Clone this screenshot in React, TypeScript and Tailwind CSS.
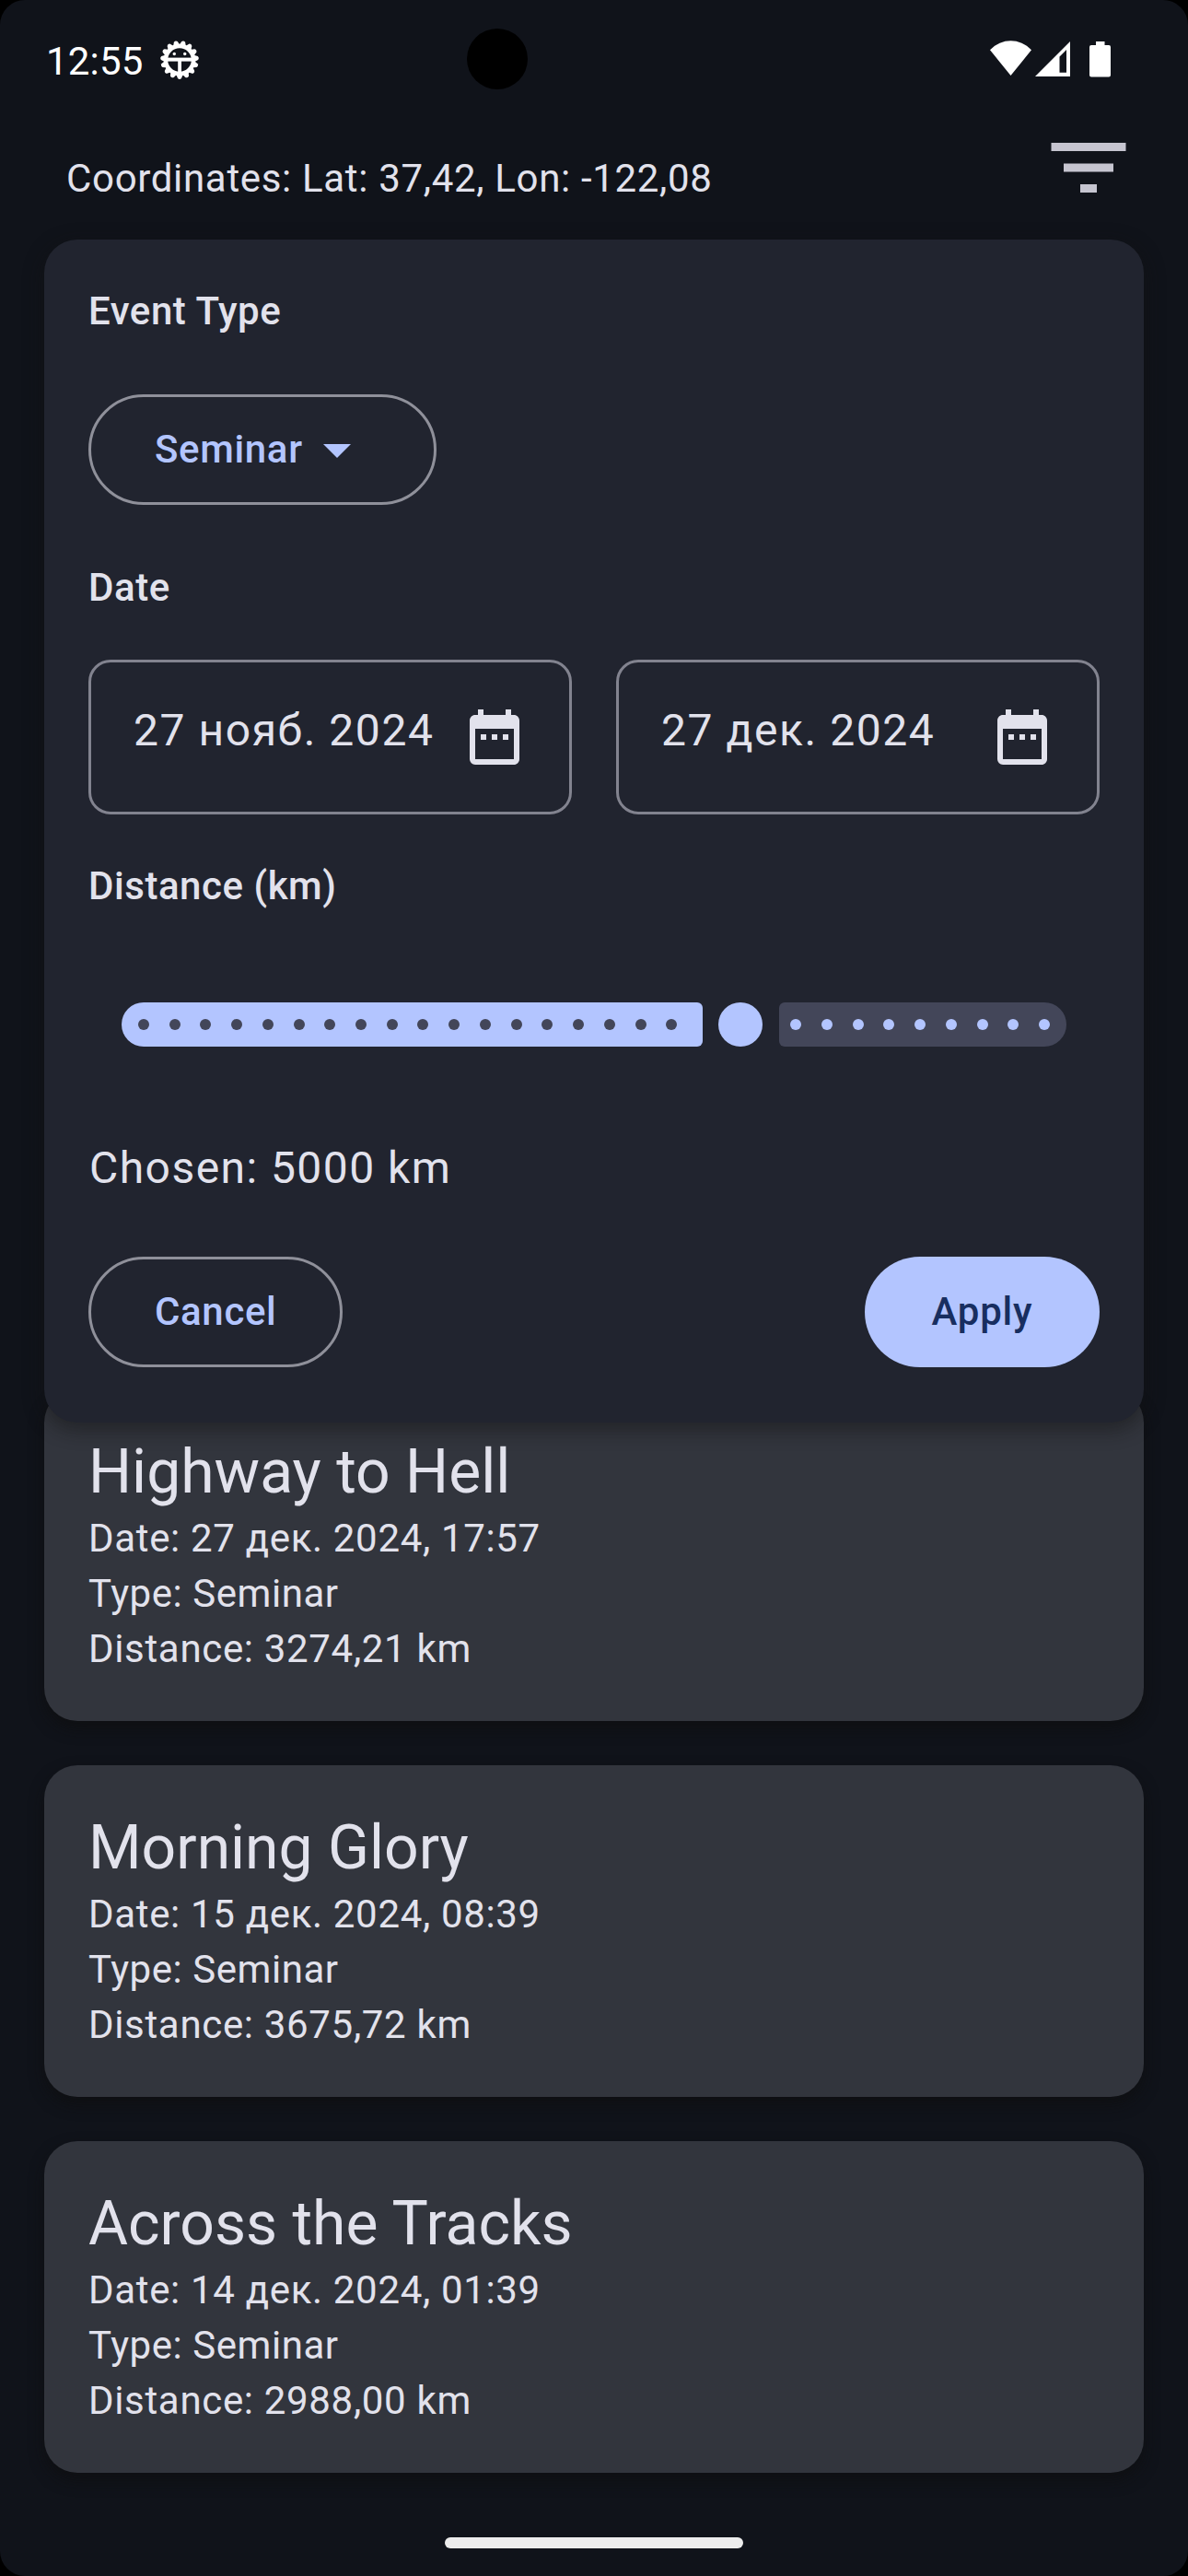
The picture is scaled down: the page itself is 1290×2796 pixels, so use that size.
import type { ReactNode } from "react";
import { MdArrowDropDown, MdDateRange, MdFilterList } from "react-icons/md";

const events = [
  { title: "Highway to Hell", date: "27 дек. 2024, 17:57", distance: "3274,21" },
  { title: "Morning Glory", date: "15 дек. 2024, 08:39", distance: "3675,72" },
  { title: "Across the Tracks", date: "14 дек. 2024, 01:39", distance: "2988,00" },
];

const TEETH = Array.from({ length: 15 }, (_, i) => i * 24 + 12);

function DebugIcon() {
  return (
    <svg viewBox="0 0 42 42" className="size-[42px]" fill="white">
      {TEETH.map((a) => (
        <path key={a} d="M17 6 L19 1 Q21 -0.8 23 1 L25 6 Z" transform={`rotate(${a} 21 21)`} />
      ))}
      <circle cx="21" cy="21" r="15" fill="none" stroke="white" strokeWidth="4.4" />
      <rect x="7" y="18.6" width="28" height="4" />
      <rect x="19.2" y="21" width="3.8" height="15" />
      <circle cx="15.3" cy="14.5" r="1.7" />
      <circle cx="26.7" cy="14.5" r="1.7" />
    </svg>
  );
}

function StatusBar() {
  return (
    <header className="relative flex h-[128px] items-start pr-[84px] pl-[50px] text-white">
      <span className="mt-[42px] w-[124px] text-[42px] leading-[50px] tracking-[0.2px]">12:55</span>
      <div className="mt-[44px]"><DebugIcon /></div>
      <div className="absolute top-[31px] left-[507px] size-[66px] rounded-full bg-black" />
      <div className="mt-[44px] ml-auto flex items-start">
        <svg viewBox="0 0 45 39" className="h-[39px] w-[45px]" fill="white">
          <path d="M0 10.3 C13 -3 32 -3 45 10.3 L22.5 38 Z" />
        </svg>
        <svg viewBox="0 0 38 38" className="mt-px ml-[4px] size-[38px]" fill="white">
          <path fillRule="evenodd" d="M38 0 V38 H0 Z M34 9 L26.5 16.5 V33.7 H34 Z" />
        </svg>
        <svg viewBox="0 0 23 39" className="mt-px ml-[21px] h-[39px] w-[23px]" fill="white">
          <path d="M7 0 H16.5 V4 H21 Q23 4 23 6 V36.5 Q23 38.5 21 38.5 H2 Q0 38.5 0 36.5 V6 Q0 4 2 4 H7 Z" />
        </svg>
      </div>
    </header>
  );
}

function Label({ children }: { children: ReactNode }) {
  return <h2 className="text-[42px] leading-[60px] font-medium tracking-[0.55px]">{children}</h2>;
}

function DateField({ value }: { value: string }) {
  return (
    <div className="flex h-[168px] flex-1 items-center justify-between rounded-[24px] border-[3px] border-[#82838f] pr-[45px] pl-[46px]">
      <span className="-mt-[14px] text-[48px] leading-[72px] tracking-[1.55px] whitespace-nowrap">{value}</span>
      <MdDateRange className="size-[72px] shrink-0" />
    </div>
  );
}

function Ticks({ count, className }: { count: number; className: string }) {
  return (
    <>
      {Array.from({ length: count }, (_, i) => (
        <i key={i} className={className} />
      ))}
    </>
  );
}

function DistanceSlider() {
  return (
    <div className="mt-[96px] flex h-[48px] items-center px-[36px]">
      <div className="flex h-full w-[630.5px] items-center gap-[21.72px] rounded-l-[24px] rounded-r-[6px] bg-[#b3c5ff] pl-[18px]">
        <Ticks count={18} className="size-[12px] shrink-0 rounded-full bg-[#434659]" />
      </div>
      <div className="ml-[17.5px] size-[48px] shrink-0 rounded-full bg-[#b3c5ff]" />
      <div className="ml-[18px] flex h-full flex-1 items-center justify-end gap-[21.72px] rounded-l-[6px] rounded-r-[24px] bg-[#434659] pr-[18px]">
        <Ticks count={9} className="size-[12px] shrink-0 rounded-full bg-[#b3c5ff]" />
      </div>
    </div>
  );
}

function FilterPanel() {
  return (
    <section className="absolute inset-x-[48px] top-[8px] z-10 h-[1284px] rounded-[36px] bg-[#21242f] px-[48px] pt-[48px] shadow-[0_6px_20px_3px_rgba(17,17,17,0.45)]">
      <Label>Event Type</Label>
      <button className="mt-[60px] flex h-[120px] w-[378px] items-center rounded-full border-[3px] border-[#8f909a] px-[69px] pb-px text-[42px] font-medium tracking-[0.65px] text-[#b3c5ff]">
        Seminar
        <MdArrowDropDown className="ml-auto size-[72px]" />
      </button>
      <div className="mt-[60px]"><Label>Date</Label></div>
      <div className="mt-[48px] flex gap-[48px]">
        <DateField value="27 нояб. 2024" />
        <DateField value="27 дек. 2024" />
      </div>
      <div className="mt-[48px]"><Label>Distance (km)</Label></div>
      <DistanceSlider />
      <p className="mt-[96px] pl-px text-[48px] leading-[72px] tracking-[1.45px]">Chosen: 5000 km</p>
      <div className="mt-[60px] flex h-[120px] justify-between text-[42px] font-medium">
        <button className="rounded-full border-[3px] border-[#8f909a] px-[69px] pb-px tracking-[0.65px] text-[#b3c5ff]">Cancel</button>
        <button className="w-[255px] rounded-full bg-[#b3c5ff] pb-px tracking-[0.8px] text-[#182e60]">Apply</button>
      </div>
    </section>
  );
}

export default function App() {
  return (
    <div className="h-[2796px] w-[1290px] overflow-hidden bg-black font-['Roboto',sans-serif]">
      <div className="flex h-full flex-col rounded-[27px] bg-[#10131a] text-[#e2e2ec]">
        <StatusBar />
        <div className="flex h-[124px] items-start justify-between pr-[54px] pl-[72px]">
          <p className="mt-[36px] text-[42px] leading-[60px] tracking-[0.67px]">Coordinates: Lat: 37,42, Lon: -122,08</p>
          <MdFilterList className="size-[108px] text-[#c6c5d0]" />
        </div>
        <main className="relative flex flex-1 flex-col">
          <FilterPanel />
          <div className="mt-[1256px] flex flex-col gap-[48px] px-[48px]">
            {events.map((e) => (
              <article key={e.title} className="h-[360px] rounded-[36px] bg-[#32353d] p-[48px] shadow-[0_8px_16px_rgba(13,13,14,0.6)]">
                <h3 className="text-[66px] leading-[84px]">{e.title}</h3>
                <div className="text-[42px] leading-[60px] tracking-[0.67px]">
                  <p>Date: {e.date}</p>
                  <p className="tracking-[0.55px]">Type: Seminar</p>
                  <p>Distance: {e.distance} km</p>
                </div>
              </article>
            ))}
          </div>
        </main>
        <div className="mb-[30px] h-[12px] w-[324px] self-center rounded-full bg-[#ececec]" />
      </div>
    </div>
  );
}
